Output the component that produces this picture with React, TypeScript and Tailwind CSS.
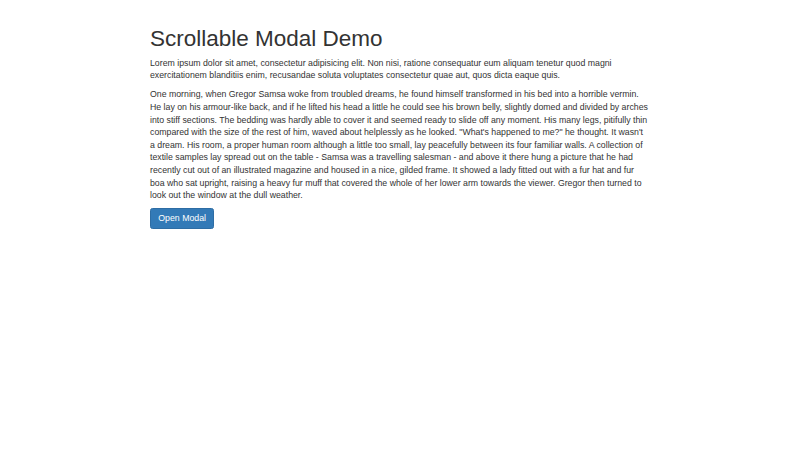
export default function App() {
  return (
    <div
      className="min-h-[450px] bg-white text-[#333333]"
      style={{ fontFamily: '"Liberation Sans", Arial, Helvetica, sans-serif' }}
    >
      <div className="mx-auto w-[500px] pt-[25.6px]">
        <h1 className="mb-[6.3px] text-[22.5px] font-medium leading-[25px] text-[#333333]">
          Scrollable Modal Demo
        </h1>
        <p className="mb-[6.3px] text-[8.76px] leading-[12.6px]">
          Lorem ipsum dolor sit amet, consectetur adipisicing elit. Non nisi, ratione consequatur eum aliquam tenetur quod
          magni exercitationem blanditiis enim, recusandae soluta voluptates consectetur quae aut, quos dicta eaque quis.
        </p>
        <p className="mb-[6.3px] text-[8.76px] leading-[12.6px]">
          One morning, when Gregor Samsa woke from troubled dreams, he found himself transformed in his bed into a horrible
          vermin. He lay on his armour-like back, and if he lifted his head a little he could see his brown belly, slightly
          domed and divided by arches into stiff sections. The bedding was hardly able to cover it and seemed ready to slide
          off any moment. His many legs, pitifully thin compared with the size of the rest of him, waved about helplessly as
          he looked. "What's happened to me?" he thought. It wasn't a dream. His room, a proper human room although a little
          too small, lay peacefully between its four familiar walls. A collection of textile samples lay spread out on the
          table - Samsa was a travelling salesman - and above it there hung a picture that he had recently cut out of an
          illustrated magazine and housed in a nice, gilded frame. It showed a lady fitted out with a fur hat and fur boa who
          sat upright, raising a heavy fur muff that covered the whole of her lower arm towards the viewer. Gregor then
          turned to look out the window at the dull weather.
        </p>
        <button
          type="button"
          className="block rounded-[2.5px] border border-[#2e6da4] bg-[#337ab7] px-[7.3px] py-[3.2px] text-[8.76px] leading-[12.6px] text-white"
        >
          Open Modal
        </button>
      </div>
    </div>
  );
}
